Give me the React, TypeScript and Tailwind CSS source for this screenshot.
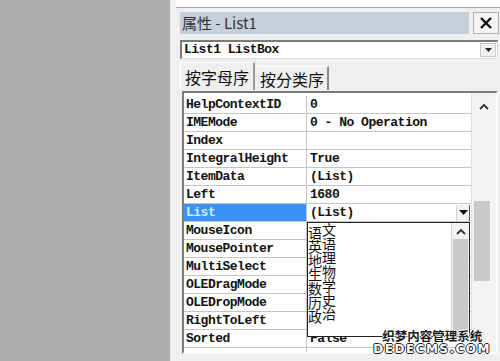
import React from 'react';

const rows: { name: string; value: string }[] = [
  { name: 'HelpContextID', value: '0' },
  { name: 'IMEMode', value: '0 - No Operation' },
  { name: 'Index', value: '' },
  { name: 'IntegralHeight', value: 'True' },
  { name: 'ItemData', value: '(List)' },
  { name: 'Left', value: '1680' },
  { name: 'List', value: '(List)' },
  { name: 'MouseIcon', value: '' },
  { name: 'MousePointer', value: '' },
  { name: 'MultiSelect', value: '' },
  { name: 'OLEDragMode', value: '' },
  { name: 'OLEDropMode', value: '' },
  { name: 'RightToLeft', value: '' },
  { name: 'Sorted', value: 'False' },
  { name: '', value: '' },
];

const items = ['语文', '英语', '地理', '生物', '数学', '历史', '政治'];

const mono = "font-['Liberation_Mono',monospace] text-[13px] tracking-[-0.5px] font-bold text-[#111]";
const cjk = "font-['Noto_Sans_CJK_SC','Noto_Sans',sans-serif]";

function UpArrow() {
  return (
    <svg width="10" height="7" viewBox="0 0 10 7">
      <path d="M1 6 L5 2 L9 6" fill="none" stroke="#333" strokeWidth="1.8" />
    </svg>
  );
}

function DownTriangle() {
  return (
    <svg width="9" height="5" viewBox="0 0 9 5">
      <path d="M0 0 H9 L4.5 5 Z" fill="#111" />
    </svg>
  );
}

export default function App() {
  return (
    <div className="w-[500px] h-[361px] flex overflow-hidden bg-[#aeacaf]">
      {/* desktop area */}
      <div className="w-[170px] shrink-0 bg-[#aeacaf]" />
      <div className="w-[6px] shrink-0 bg-[#f2f0f3] border-l border-[#e2e0e3]" />

      {/* properties window */}
      <div className="flex-1 bg-[#efeff0] flex flex-col pl-[4px] relative">
        <div className="h-[8px] -ml-[4px] bg-white border-b border-[#a8a8a8]" />

        {/* title bar */}
        <div className="mt-[4px] h-[22px] flex">
          <div className={`flex-1 bg-[#c6d0dc] flex items-center pl-[2px] text-[15px] text-[#333] ${cjk}`}>
            属性 - List1
          </div>
          <div className="w-[26px] ml-[4px] mr-[1px] bg-[#f4f4f4] border border-[#b0b0b0] flex items-center justify-center">
            <svg width="14" height="14" viewBox="0 0 14 14">
              <path d="M2 2 L12 12 M12 2 L2 12" stroke="#111" strokeWidth="2.4" />
            </svg>
          </div>
        </div>

        {/* object combo */}
        <div className="mt-[6px] h-[19px] mr-[2px] bg-white border-t-2 border-l-2 border-[#7a7a7a] border-b border-r border-b-[#dcdcdc] border-r-[#dcdcdc] flex items-center">
          <span className={`flex-1 pl-[2px] ${mono}`}>List1 ListBox</span>
          <div className="w-[16px] h-[14px] mr-[1px] bg-[#f0f0f0] border border-[#c8c8c8] flex items-center justify-center">
            <svg width="7" height="4" viewBox="0 0 7 4">
              <path d="M0 0 H7 L3.5 4 Z" fill="#222" />
            </svg>
          </div>
        </div>

        {/* tabs */}
        <div className={`mt-[3px] h-[28px] flex items-end text-[16px] text-[#111] ${cjk}`}>
          <div className="h-[28px] px-[4px] flex items-center border-l border-t border-white border-r-2 border-r-[#9a9a9a]">
            按字母序
          </div>
          <div className="h-[24px] px-[3px] ml-[2px] flex items-center border-t border-white border-r-2 border-r-[#8a8a8a]">
            按分类序
          </div>
        </div>

        {/* property grid */}
        <div className="relative mt-[1px] h-[263px] mr-[2px] ml-[2px] border-t-2 border-l-2 border-[#7c7c7c] border-b-2 border-r-2 border-b-[#fafafa] border-r-[#fafafa] bg-white flex">
          <div className="flex-1 pt-[3px] overflow-hidden">
            {rows.map((r) => {
              const sel = r.name === 'List';
              return (
                <div key={r.name + r.value} className="h-[18px] flex border-b border-[#c4c4c4]">
                  <div
                    className={`w-[123px] shrink-0 border-r border-[#c4c4c4] pl-[2px] flex items-center ${mono} ${
                      sel ? 'bg-[#3a92f2] !text-[#c8f4ff]' : ''
                    }`}
                  >
                    {r.name}
                  </div>
                  <div className={`flex-1 pl-[3px] flex items-center ${mono}`}>
                    {r.value}
                    {sel && (
                      <div className="ml-auto mr-[1px] w-[14px] h-[16px] bg-[#f2f2f2] border-l border-[#d0d0d0] border-r border-r-[#555] flex items-center justify-center">
                        <DownTriangle />
                      </div>
                    )}
                  </div>
                </div>
              );
            })}
          </div>

          {/* grid scrollbar */}
          <div className="w-[25px] shrink-0 bg-[#f3f3f3] border-l border-[#e0e0e0] flex flex-col items-center">
            <div className="h-[20px] w-full flex items-center justify-center mt-[3px]">
              <UpArrow />
            </div>
            <div className="mt-[85px] w-[16px] h-[80px] bg-[#c9c9c9] -ml-[5px]" />
          </div>

          {/* dropdown list of the List property */}
          <div className="absolute left-[123px] top-[129px] w-[163px] h-[115px] border border-[#222] bg-white flex">
            <div className={`flex-1 pt-[2px] text-[14px] leading-[14px] text-[#111] ${cjk}`}>
              {items.map((it) => (
                <div key={it} className="h-[14px] flex">
                  <span className="w-[14px]">{it[0]}</span>
                  <span className="w-[14px] -translate-y-[3px]">{it[1]}</span>
                </div>
              ))}
            </div>
            <div className="w-[18px] bg-[#f2f2f2] border-l border-[#d0d0d0] flex flex-col items-center">
              <div className="h-[16px] flex items-center justify-center">
                <UpArrow />
              </div>
              <div className="flex-1 w-[15px] bg-[#c9c9c9]" />
            </div>
          </div>
        </div>

        {/* watermark */}
        <div className="absolute right-[9px] bottom-[6px] flex flex-col items-center leading-none">
          <span
            className={`text-[12.5px] font-bold text-[#1a1a1a] ${cjk}`}
            style={{ textShadow: '1px 0 #fff, -1px 0 #fff, 0 1px #fff, 0 -1px #fff' }}
          >
            织梦内容管理系统
          </span>
          <span
            className="mt-[1px] text-[12px] font-bold tracking-[1.5px] text-white font-['DejaVu_Sans',sans-serif]"
            style={{ textShadow: '1px 0 #222, -1px 0 #222, 0 1px #222, 0 -1px #222' }}
          >
            DEDECMS.COM
          </span>
        </div>
      </div>
    </div>
  );
}
